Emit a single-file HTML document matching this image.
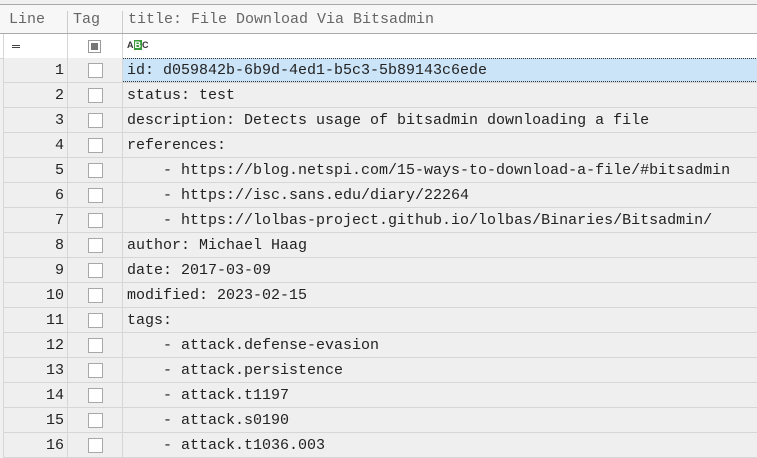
<!DOCTYPE html>
<html><head><style>
body{margin:0;width:757px;height:457px;overflow:hidden;background:#f0f0f0;font-family:"Liberation Mono",monospace;font-size:15px;color:#222;position:relative}
.hdr{position:absolute;left:0;top:4px;width:757px;height:28px;background:#f7f7f7;border-top:1px solid #aaa;border-bottom:1px solid #aaa;color:#666}
.hdr span{position:absolute;top:6px}
.sep{position:absolute;top:6px;width:1px;height:22px;background:#ccc}
.row{position:absolute;left:3px;width:754px;height:24px;border-bottom:1px solid #d6d6d6;background:#efefef}
.row .n{position:absolute;left:0;width:61px;text-align:right;top:4px}
.row .c{position:absolute;left:124px;top:4px;white-space:pre}
.row .cb{position:absolute;left:85px;top:5px;width:13px;height:13px;border:1px solid #a8a8a8;background:#fff}
.vl{position:absolute;top:34px;width:1px;height:423px;background:#d6d6d6}
</style></head><body>
<div class="hdr"><span style="left:9px">Line</span><span style="left:73px">Tag</span><span style="left:128px">title: File Download Via Bitsadmin</span>
<div class="sep" style="left:67px"></div><div class="sep" style="left:122px"></div></div>
<div style="position:absolute;left:0;top:34px;width:757px;height:24px;background:#fff;border-bottom:1px solid #d6d6d6">
<div style="position:absolute;left:12px;top:11px;width:8px;height:1px;background:#444;box-shadow:0 2px 0 #444"></div>
<div style="position:absolute;left:88px;top:6px;width:11px;height:11px;border:1px solid #999;background:#fff"><div style="margin:2px;width:7px;height:7px;background:#777"></div></div>
<div style="position:absolute;left:127px;top:6px;font-size:9px;line-height:11px;font-family:'Liberation Sans',sans-serif;font-weight:bold;color:#333">A<span style="background:#3a9a3a;color:#fff;padding:0 1px">B</span>C</div>
</div>
<div class="row" style="top:58px"><div class="n">1</div><div class="cb"></div><div style="position:absolute;left:119px;top:0;width:634px;height:22px;background:#cce4f7;border:1px dotted #333"></div><div class="c">id: d059842b-6b9d-4ed1-b5c3-5b89143c6ede</div></div>
<div class="row" style="top:83px"><div class="n">2</div><div class="cb"></div><div class="c">status: test</div></div>
<div class="row" style="top:108px"><div class="n">3</div><div class="cb"></div><div class="c">description: Detects usage of bitsadmin downloading a file</div></div>
<div class="row" style="top:133px"><div class="n">4</div><div class="cb"></div><div class="c">references:</div></div>
<div class="row" style="top:158px"><div class="n">5</div><div class="cb"></div><div class="c">    - https://blog.netspi.com/15-ways-to-download-a-file/#bitsadmin</div></div>
<div class="row" style="top:183px"><div class="n">6</div><div class="cb"></div><div class="c">    - https://isc.sans.edu/diary/22264</div></div>
<div class="row" style="top:208px"><div class="n">7</div><div class="cb"></div><div class="c">    - https://lolbas-project.github.io/lolbas/Binaries/Bitsadmin/</div></div>
<div class="row" style="top:233px"><div class="n">8</div><div class="cb"></div><div class="c">author: Michael Haag</div></div>
<div class="row" style="top:258px"><div class="n">9</div><div class="cb"></div><div class="c">date: 2017-03-09</div></div>
<div class="row" style="top:283px"><div class="n">10</div><div class="cb"></div><div class="c">modified: 2023-02-15</div></div>
<div class="row" style="top:308px"><div class="n">11</div><div class="cb"></div><div class="c">tags:</div></div>
<div class="row" style="top:333px"><div class="n">12</div><div class="cb"></div><div class="c">    - attack.defense-evasion</div></div>
<div class="row" style="top:358px"><div class="n">13</div><div class="cb"></div><div class="c">    - attack.persistence</div></div>
<div class="row" style="top:383px"><div class="n">14</div><div class="cb"></div><div class="c">    - attack.t1197</div></div>
<div class="row" style="top:408px"><div class="n">15</div><div class="cb"></div><div class="c">    - attack.s0190</div></div>
<div class="row" style="top:433px"><div class="n">16</div><div class="cb"></div><div class="c">    - attack.t1036.003</div></div>
<div class="vl" style="left:3px"></div><div class="vl" style="left:67px"></div><div class="vl" style="left:122px"></div>
</body></html>
